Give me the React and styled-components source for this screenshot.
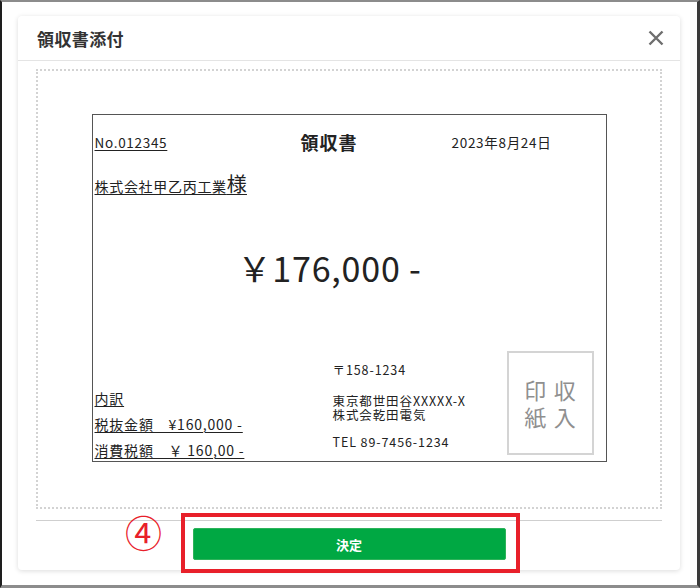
import React from "react";
import styled, { createGlobalStyle } from "styled-components";

const GlobalStyle = createGlobalStyle`
    html, body {
        margin: 0;
        padding: 0;
        background: #ffffff;
    }
    body {
        font-family: "Noto Sans CJK JP", "Noto Sans", sans-serif;
        color: #333;
    }
`;

const JP = `"Noto Sans CJK JP", "Noto Sans", sans-serif`;

// screenshot frame around the whole capture
const Frame = styled.div`
    box-sizing: border-box;
    width: 700px;
    height: 588px;
    border-top: 2px solid #8c8c8c;
    border-left: 2px solid #1e1e1e;
    border-right: 3px solid #3a3a3a;
    border-bottom: 3px solid #8c8c8c;
    padding: 14px 0 0 16px;
    background: #fff;
`;

const Card = styled.div`
    box-sizing: border-box;
    width: 662px;
    height: 554px;
    background: #fff;
    border-radius: 4px;
    box-shadow: 0 1px 5px rgba(0, 0, 0, 0.14);
    display: flex;
    flex-direction: column;
`;

//#region Header
const Header = styled.div`
    box-sizing: border-box;
    height: 45px;
    border-bottom: 1px solid #e4e4e4;
    display: flex;
    align-items: center;
    justify-content: space-between;
    padding: 0 15px 0 19px;
`;

const Title = styled.div`
    font-family: ${JP};
    font-size: 17px;
    font-weight: 700;
    letter-spacing: 0.4px;
    color: #333;
`;

const Close = styled.button`
    border: none;
    background: none;
    padding: 0;
    width: 18px;
    height: 18px;
    display: flex;
    cursor: pointer;
`;
//#endregion Header

//#region Body
const Body = styled.div`
    box-sizing: border-box;
    margin: 8px 18px 0;
    height: 440px;
    border: 2px dotted #d3d3d3;
    padding-top: 43px;
`;

const Receipt = styled.div`
    box-sizing: border-box;
    width: 515px;
    height: 348px;
    margin: 0 auto;
    border: 1px solid #555;
    padding: 16px 0 0 2px;
    display: flex;
    flex-direction: column;
    font-family: ${JP};
    color: #222;
`;

const TopRow = styled.div`
    display: flex;
    align-items: center;
    height: 22px;
`;

const Under = styled.span`
    text-decoration: underline;
    text-underline-offset: 2px;
    text-decoration-thickness: 1px;
    font-size: ${({ size }) => size || 13.5}px;
    letter-spacing: ${({ spacing }) => spacing ?? 0.7}px;
`;

const No = styled(Under)`
    width: 206px;
`;

const DocTitle = styled.div`
    width: 151px;
    font-size: 18px;
    font-weight: 700;
    letter-spacing: 1px;
`;

const DateText = styled.div`
    font-size: 13.5px;
    letter-spacing: 0.7px;
`;

const Addressee = styled.div`
    margin-top: 19px;
    height: 26px;
    display: flex;
    align-items: flex-end;
`;

const Amount = styled.div`
    margin: 50px 0 0 143px;
    font-size: 34px;
    line-height: 40px;
    letter-spacing: 0.8px;
`;

const Bottom = styled.div`
    margin-top: 63px;
    flex: 1;
    display: flex;
`;

const Breakdown = styled.div`
    width: 238px;
    display: flex;
    flex-direction: column;
    justify-content: flex-end;
    align-items: flex-start;
    padding-bottom: 2px;
    gap: 8px;
`;

const BreakLine = styled(Under)`
    white-space: pre;
    line-height: 18px;
`;

const Address = styled.div`
    width: 174px;
    padding-top: 12px;
    font-size: 12.5px;
    letter-spacing: 0.9px;
    line-height: 14px;
`;

const AddrBlock = styled.div`
    margin-top: ${({ gap }) => gap || 0}px;
`;

const Stamp = styled.div`
    box-sizing: border-box;
    width: 87px;
    height: 104px;
    border: 2px solid #d4d4d4;
    display: grid;
    grid-template-columns: 1fr 1fr;
    align-content: center;
    padding: 0 12px;
    font-size: 22px;
    line-height: 27px;
    color: #8f8f8f;
    text-align: center;
`;
//#endregion Body

//#region Footer
const Footer = styled.div`
    position: relative;
    margin: 11px 18px 0;
    border-top: 1px solid #cfcfcf;
    display: flex;
    justify-content: center;
    padding-top: 7px;
`;

const Decide = styled.button`
    width: 313px;
    height: 32px;
    border: 1px solid #2db35a;
    border-radius: 2px;
    background: #00a843;
    color: #fff;
    font-family: ${JP};
    font-size: 13px;
    font-weight: 700;
    cursor: pointer;
`;

const Highlight = styled.div`
    position: absolute;
    left: 145px;
    top: -8px;
    width: 339px;
    height: 60px;
    box-sizing: border-box;
    border: 4px solid #e8202a;
    pointer-events: none;
`;

const StepMark = styled.div`
    position: absolute;
    left: 89px;
    top: -11px;
    font-family: ${JP};
    font-size: 37px;
    line-height: 44px;
    color: #e8202a;
`;
//#endregion Footer

const CloseIcon = () => (
    <svg width="18" height="18" viewBox="0 0 18 18">
        <path
            d="M2.5 2.5 L15.5 15.5 M15.5 2.5 L2.5 15.5"
            stroke="#6e6e6e"
            strokeWidth="2.4"
            strokeLinecap="butt"
        />
    </svg>
);

export default function App() {
    return (
        <>
            <GlobalStyle />
            <Frame>
                <Card>
                    <Header>
                        <Title>領収書添付</Title>
                        <Close aria-label="close">
                            <CloseIcon />
                        </Close>
                    </Header>
                    <Body>
                        <Receipt>
                            <TopRow>
                                <No>No.012345</No>
                                <DocTitle>領収書</DocTitle>
                                <DateText>2023年8月24日</DateText>
                            </TopRow>
                            <Addressee>
                                <Under size={14}>
                                    株式会社甲乙丙工業
                                    <Under size={20} spacing={0}>様</Under>
                                </Under>
                            </Addressee>
                            <Amount>￥176,000 -</Amount>
                            <Bottom>
                                <Breakdown>
                                    <BreakLine size={14} spacing={0.8}>内訳</BreakLine>
                                    <BreakLine size={14} spacing={0.8}>{"税抜金額　¥160,000 -"}</BreakLine>
                                    <BreakLine size={14} spacing={0.8}>{"消費税額　￥ 160,00 -"}</BreakLine>
                                </Breakdown>
                                <Address>
                                    <AddrBlock>〒158-1234</AddrBlock>
                                    <AddrBlock gap={17}>
                                        東京都世田谷XXXXX-X
                                        <br />
                                        株式会乾田電気
                                    </AddrBlock>
                                    <AddrBlock gap={13}>TEL 89-7456-1234</AddrBlock>
                                </Address>
                                <Stamp>
                                    <span>印</span>
                                    <span>収</span>
                                    <span>紙</span>
                                    <span>入</span>
                                </Stamp>
                            </Bottom>
                        </Receipt>
                    </Body>
                    <Footer>
                        <StepMark>④</StepMark>
                        <Decide>決定</Decide>
                        <Highlight />
                    </Footer>
                </Card>
            </Frame>
        </>
    );
}
